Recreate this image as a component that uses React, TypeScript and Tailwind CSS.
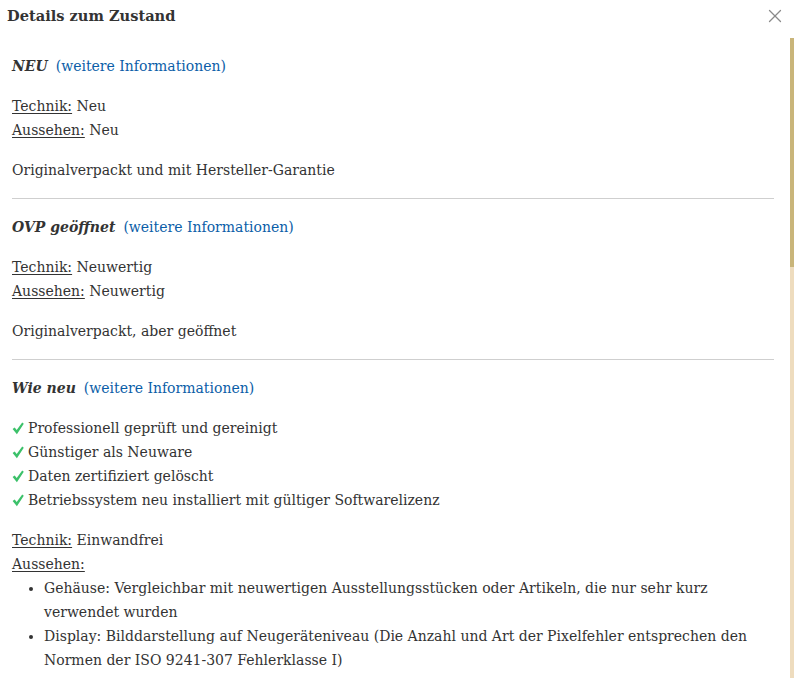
import { X } from "lucide-react";

const serif = { fontFamily: '"DejaVu Serif", serif' };

function Header({ title }: { title: string }) {
  return (
    <p className="leading-6">
      <span className="font-bold italic">{title}</span>
      <a className="ml-2 text-[#0b5ea8]">(weitere Informationen)</a>
    </p>
  );
}

function Label({ name, value }: { name: string; value?: string }) {
  return (
    <p className="leading-6">
      <span className="underline underline-offset-2">{name}</span>
      {value ? ` ${value}` : ""}
    </p>
  );
}

function Check() {
  return (
    <svg width="12" height="13" viewBox="0 0 12 13" className="mr-[4px] shrink-0">
      <path
        d="M0.6 7.1 L2.7 5.5 L4.7 8.1 L10.2 0.5 L11.8 1.7 L4.9 12.2 Z"
        fill="#3cc16a"
      />
    </svg>
  );
}

const checks = [
  "Professionell geprüft und gereinigt",
  "Günstiger als Neuware",
  "Daten zertifiziert gelöscht",
  "Betriebssystem neu installiert mit gültiger Softwarelizenz",
];

export default function App() {
  return (
    <div
      className="relative w-[794px] h-[678px] overflow-hidden bg-white text-[#333] text-[14px]"
      style={serif}
    >
      <div className="flex items-center justify-between h-[31px] pl-[7px] pr-[8px]">
        <h2 className="font-bold text-[14.6px]">Details zum Zustand</h2>
        <X className="w-[22px] h-[22px] text-[#8a8a8a]" strokeWidth={1.4} />
      </div>

      <div className="pl-[12px] pr-[20px] pt-[23px]">
        <section className="pb-[16px] border-b border-[#cfcfcf]">
          <Header title="NEU" />
          <div className="mt-[16px]">
            <Label name="Technik:" value="Neu" />
            <Label name="Aussehen:" value="Neu" />
          </div>
          <p className="mt-[16px] leading-6">Originalverpackt und mit Hersteller-Garantie</p>
        </section>

        <section className="pt-[16px] pb-[16px] border-b border-[#cfcfcf]">
          <Header title="OVP geöffnet" />
          <div className="mt-[16px]">
            <Label name="Technik:" value="Neuwertig" />
            <Label name="Aussehen:" value="Neuwertig" />
          </div>
          <p className="mt-[16px] leading-6">Originalverpackt, aber geöffnet</p>
        </section>

        <section className="pt-[16px]">
          <Header title="Wie neu" />
          <ul className="mt-[16px]">
            {checks.map((c) => (
              <li key={c} className="leading-6 flex items-center">
                <Check />
                {c}
              </li>
            ))}
          </ul>
          <div className="mt-[16px]">
            <Label name="Technik:" value="Einwandfrei" />
            <Label name="Aussehen:" />
          </div>
          <ul className="list-disc pl-[32px]">
            <li className="leading-6">
              Gehäuse: Vergleichbar mit neuwertigen Ausstellungsstücken oder Artikeln, die nur sehr kurz
              verwendet wurden
            </li>
            <li className="leading-6">
              Display: Bilddarstellung auf Neugeräteniveau (Die Anzahl und Art der Pixelfehler entsprechen den
              Normen der ISO 9241-307 Fehlerklasse I)
            </li>
          </ul>
        </section>
      </div>

      <div className="absolute right-0 top-[38px] bottom-0 w-[4px] bg-[#eedcbe]">
        <div className="h-[229px] bg-[#c9b57a]" />
      </div>
    </div>
  );
}
